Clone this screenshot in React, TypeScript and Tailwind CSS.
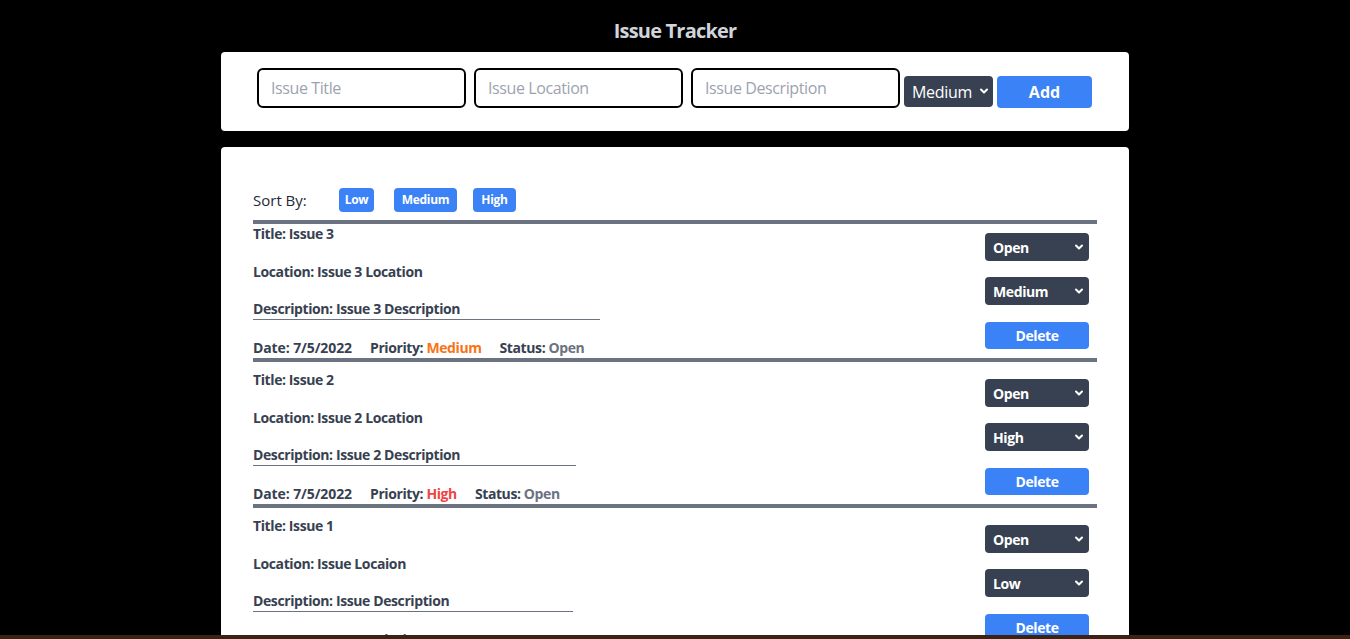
import React from "react";

const font = { fontFamily: '"Open Sans", "Noto Sans", sans-serif' };

function Chevron({ className }: { className?: string }) {
  return (
    <svg
      className={className}
      width="10"
      height="10"
      viewBox="0 0 10 10"
      fill="none"
      stroke="white"
      strokeWidth="2"
      strokeLinecap="round"
      strokeLinejoin="round"
    >
      <path d="M2 3.5 L5 6.5 L8 3.5" />
    </svg>
  );
}

function SmallSelect({ value, options }: { value: string; options: string[] }) {
  return (
    <div className="relative w-[104px] h-[28px]">
      <select
        defaultValue={value}
        className="appearance-none w-full h-full bg-[#374151] text-white font-bold text-[14px] tracking-[-0.4px] rounded pl-2 outline-none"
      >
        {options.map((o) => (
          <option key={o}>{o}</option>
        ))}
      </select>
      <Chevron className="pointer-events-none absolute right-[5px] top-[9px]" />
    </div>
  );
}

type Issue = {
  title: string;
  location: string;
  description: string;
  priority: "Low" | "Medium" | "High";
};

const issues: Issue[] = [
  { title: "Issue 3", location: "Issue 3 Location", description: "Issue 3 Description", priority: "Medium" },
  { title: "Issue 2", location: "Issue 2 Location", description: "Issue 2 Description", priority: "High" },
  { title: "Issue 1", location: "Issue Locaion", description: "Issue Description", priority: "Low" },
];

function priorityClass(p: string) {
  if (p === "Medium") return "text-[#f97316]";
  if (p === "High") return "text-[#ef4444]";
  return "text-[#22c55e]";
}

function IssueRow({ issue, first }: { issue: Issue; first: boolean }) {
  return (
    <div className={first ? "border-t-4 border-[#6b7280] flex justify-between" : "border-t-4 border-[#6b7280] flex justify-between pt-2"}>
      <div className="flex flex-col text-[14px] font-bold text-[#374151] leading-5 tracking-[-0.4px]">
        <p className="h-5">Title: {issue.title}</p>
        <p className="h-5 mt-[18px]">Location: {issue.location}</p>
        <p className="h-[21px] mt-[17px] border-b border-[#6b7280]">Description: {issue.description}</p>
        <p className="h-5 mt-[18px] whitespace-nowrap">
          <span className="mr-[18px] tracking-[-0.1px]">Date: 7/5/2022</span>
          <span className="mr-[18px]">
            Priority: <span className={priorityClass(issue.priority)}>{issue.priority}</span>
          </span>
          <span className="mr-4">
            Status: <span className="text-[#6b7280]">Open</span>
          </span>
        </p>
      </div>
      <div className="flex flex-col pt-[9px] pb-[9px] mr-2">
        <SmallSelect value="Open" options={["Open", "In Progress", "Closed"]} />
        <div className="mt-4">
          <SmallSelect value={issue.priority} options={["Low", "Medium", "High"]} />
        </div>
        <button className="mt-[17px] w-[104px] h-[27px] bg-[#3b82f6] text-white font-bold text-[14px] tracking-[-0.4px] rounded">
          Delete
        </button>
      </div>
    </div>
  );
}

export default function App() {
  return (
    <div className="min-h-screen bg-black" style={font}>
      <h1 className="text-center text-[20px] font-bold text-[#d1d5db] leading-7 pt-[17px] pb-[7px] tracking-[-0.8px]">
        Issue Tracker
      </h1>
      <div className="w-[908px] mx-auto bg-white rounded h-[79px] flex justify-start items-start pt-4 pl-9 gap-2">
        <input
          placeholder="Issue Title"
          className="w-[209px] h-10 border-2 border-black rounded-md px-3 text-[16px] tracking-[-0.4px] placeholder-[#9ca3af] outline-none"
        />
        <input
          placeholder="Issue Location"
          className="w-[209px] h-10 border-2 border-black rounded-md px-3 text-[16px] tracking-[-0.4px] placeholder-[#9ca3af] outline-none"
        />
        <input
          placeholder="Issue Description"
          className="w-[209px] h-10 border-2 border-black rounded-md px-3 text-[16px] tracking-[-0.4px] placeholder-[#9ca3af] outline-none"
        />
        <div className="flex gap-1 mt-2 -ml-1">
          <div className="relative w-[89px] h-[31px]">
            <select
              defaultValue="Medium"
              className="appearance-none w-full h-full bg-[#374151] text-white text-[16px] tracking-[-0.3px] rounded pl-2 outline-none"
            >
              <option>Low</option>
              <option>Medium</option>
              <option>High</option>
            </select>
            <Chevron className="pointer-events-none absolute right-[4px] top-[10px]" />
          </div>
          <button className="w-[95px] h-8 bg-[#3b82f6] text-white font-bold text-[16px] rounded">Add</button>
        </div>
      </div>
      <div className="w-[908px] mx-auto bg-white rounded mt-4 px-8 pt-[41px] pb-8">
        <div className="flex items-center h-6 mb-2">
          <span className="text-[15px] text-[#1f2937] w-[86px]">Sort By:</span>
          <button className="w-[35px] h-6 bg-[#3b82f6] text-white font-bold text-[12px] tracking-[-0.3px] rounded">Low</button>
          <button className="ml-5 w-[63px] h-6 bg-[#3b82f6] text-white font-bold text-[12px] tracking-[-0.3px] rounded">Medium</button>
          <button className="ml-4 w-[43px] h-6 bg-[#3b82f6] text-white font-bold text-[12px] tracking-[-0.3px] rounded">High</button>
        </div>
        {issues.map((i, idx) => (
          <IssueRow key={i.title} issue={i} first={idx === 0} />
        ))}
      </div>
      <div className="fixed left-0 right-0 bottom-0 h-[4px] bg-[#3a2312]" />
    </div>
  );
}
